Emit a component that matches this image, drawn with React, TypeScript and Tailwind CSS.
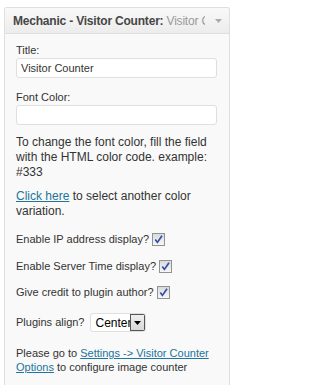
import React from "react";

// old-style checked checkbox
function Check() {
  return (
    <span className="inline-block w-[13px] h-[13px] border border-[#929292] bg-gradient-to-b from-[#dadada] to-[#f7f7f7] shrink-0">
      <svg width="11" height="11" viewBox="0 0 11 11" className="block">
        <path d="M2.3 5.6 L4.4 8.4 L9 1.8" fill="none" stroke="#2f4fa8" strokeWidth="1.7" />
      </svg>
    </span>
  );
}

function CheckRow({ label, className = "" }: { label: string; className?: string }) {
  return (
    <div className={`flex items-center gap-[3px] h-[14px] text-[11px] leading-[14px] ${className}`}>
      <span>{label}</span>
      <Check />
    </div>
  );
}

export default function App() {
  return (
    <div className="w-[236px] h-[385px] bg-white pt-[7px] pl-[4px] overflow-hidden font-['Liberation_Sans',Arial,sans-serif] text-[#333]">
      <div className="w-[226px] h-[378px] border border-b-0 border-[#dfdfdf] rounded-t-[3px] bg-[#f9f9f9]">
        {/* header */}
        <div className="h-[26px] flex items-center pl-[8px] bg-gradient-to-b from-[#f9f9f9] to-[#ececec] border-b border-[#dfdfdf] rounded-t-[3px]">
          <div className="w-[192px] overflow-hidden whitespace-nowrap text-[12px] leading-[14px] tracking-[-0.2px] text-[#464646]">
            <span className="font-bold">Mechanic - Visitor Counter:</span>{" "}
            <span className="text-[#9a9a9a]">Visitor Counter</span>
          </div>
          <svg width="7" height="4" viewBox="0 0 7 4" className="ml-[10px] mt-[1px]">
            <path d="M0 0 L7 0 L3.5 4 Z" fill="#aaaaaa" />
          </svg>
        </div>

        {/* body */}
        <div className="pl-[11px] pr-[12px] pt-[9px]">
          <div className="text-[11px] leading-[14px]">Title:</div>
          <div className="mt-[1px] h-[20px] w-[201px] bg-white border border-[#dfdfdf] rounded-[3px] px-[4px] flex items-center text-[11px]">
            Visitor Counter
          </div>

          <div className="mt-[12px] text-[11px] leading-[14px]">Font Color:</div>
          <div className="mt-[1px] h-[20px] w-[201px] bg-white border border-[#dfdfdf] rounded-[3px]" />

          <p className="mt-[10px] text-[12px] leading-[15px]">
            To change the font color, fill the field with the HTML color code. example: #333
          </p>
          <p className="mt-[9px] text-[12px] leading-[15px]">
            <span className="text-[#21759b] underline">Click here</span> to select another color variation.
          </p>

          <CheckRow label="Enable IP address display?" className="mt-[13px]" />
          <CheckRow label="Enable Server Time display?" className="mt-[13px]" />
          <CheckRow label="Give credit to plugin author?" className="mt-[12px]" />

          <div className="mt-[14px] flex items-center gap-[5px] text-[11px]">
            <span>Plugins align?</span>
            <div className="relative h-[19px] w-[56px] bg-white border border-[#dfdfdf] rounded-[3px] overflow-hidden">
              <span className="absolute left-[5px] top-[2px] text-[12px] leading-[14px] text-black">Center</span>
              <span className="absolute right-0 top-0 w-[15px] h-[17px] border border-[#555] bg-gradient-to-b from-[#f0f0f0] to-[#d8d8d8] flex items-center justify-center">
                <svg width="7" height="4" viewBox="0 0 7 4">
                  <path d="M0 0 L7 0 L3.5 4 Z" fill="#000" />
                </svg>
              </span>
            </div>
          </div>

          <p className="mt-[14px] text-[11px] leading-[14px]">
            Please go to <span className="text-[#21759b] underline">Settings -&gt; Visitor Counter Options</span> to configure image counter
          </p>
        </div>
      </div>
    </div>
  );
}
